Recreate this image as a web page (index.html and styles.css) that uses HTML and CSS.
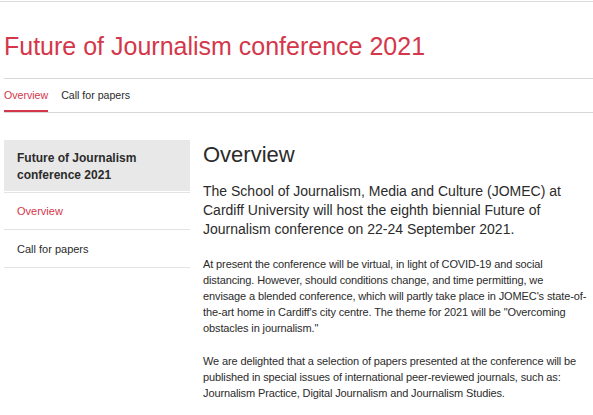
FILE: index.html
```html
<!DOCTYPE html>
<html lang="en">
<head>
<meta charset="utf-8">
<title>Future of Journalism conference 2021</title>
<link rel="stylesheet" href="styles.css">
</head>
<body>
<div class="page">
  <header class="header">
    <h1 class="title">Future of Journalism conference 2021</h1>
    <nav class="tabs">
      <a class="tab tab-active" href="#">Overview</a>
      <a class="tab" href="#">Call for papers</a>
    </nav>
  </header>
  <div class="layout">
    <aside class="side">
      <div class="side-head">Future of Journalism conference 2021</div>
      <a class="side-link side-active" href="#">Overview</a>
      <a class="side-link" href="#">Call for papers</a>
    </aside>
    <main class="main">
      <h2 class="h2">Overview</h2>
      <p class="lead">The School of Journalism, Media and Culture (JOMEC) at Cardiff University will host the eighth biennial Future of Journalism conference on 22-24 September 2021.</p>
      <p class="text">At present the conference will be virtual, in light of COVID-19 and social distancing. However, should conditions change, and time permitting, we envisage a blended conference, which will partly take place in JOMEC's state-of-the-art home in Cardiff's city centre. The theme for 2021 will be "Overcoming obstacles in journalism."</p>
      <p class="text">We are delighted that a selection of papers presented at the conference will be published in special issues of international peer-reviewed journals, such as: Journalism Practice, Digital Journalism and Journalism Studies.</p>
    </main>
  </div>
</div>
</body>
</html>
```
FILE: styles.css
```css
html, body {
  margin: 0;
  padding: 0;
  background: #fff;
}
body {
  font-family: "Liberation Sans", Arial, sans-serif;
  color: #2b2b2b;
}
.page {
  border-top: 1px solid #ddd;
  margin-top: 1px;
  padding-left: 4px;
}
.header {
  padding-top: 28px;
}
.title {
  margin: 0;
  font-size: 25px;
  font-weight: normal;
  color: #d4374a;
  line-height: 32px;
  padding-bottom: 16px;
  border-bottom: 1px solid #d8d8d8;
}
.tabs {
  display: flex;
  gap: 13px;
  border-bottom: 1px solid #d8d8d8;
}
.tab {
  font-size: 10.6px;
  color: #2b2b2b;
  text-decoration: none;
  padding: 10px 0 8px;
  line-height: 13px;
  border-bottom: 2px solid transparent;
}
.tab-active {
  color: #d4374a;
  border-bottom-color: #d4374a;
}
.layout {
  display: flex;
  gap: 13px;
  margin-top: 27px;
}
.side {
  width: 186px;
  flex: none;
  display: flex;
  flex-direction: column;
}
.side-head {
  background: #e8e8e8;
  font-weight: bold;
  font-size: 12px;
  line-height: 17px;
  padding: 10px 13px 7px;
  border-bottom: 1px solid #fff;
  box-shadow: 0 1px 0 #e3e3e3;
  margin-bottom: 1px;
}
.side-link {
  font-size: 11px;
  line-height: 13px;
  padding: 12px 13px 11px;
  text-decoration: none;
  color: #2b2b2b;
  border-bottom: 1px solid #e3e3e3;
}
.side-link + .side-link {
  padding-top: 13px;
}
.side-active {
  color: #d4374a;
}
.main {
  flex: 1;
  min-width: 0;
  padding-right: 5px;
}
.h2 {
  margin: 2px 0 0;
  font-size: 22px;
  font-weight: normal;
  line-height: 26px;
}
.lead {
  margin: 14px 0 0;
  font-size: 14px;
  line-height: 19px;
}
.text {
  margin: 17px 0 0;
  font-size: 11px;
  line-height: 16px;
  letter-spacing: -0.12px;
}
```
